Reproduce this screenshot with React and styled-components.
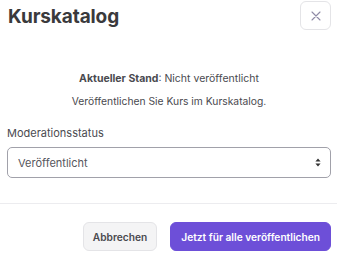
import React from 'react';
import styled, { createGlobalStyle } from 'styled-components';

const GlobalStyle = createGlobalStyle`
  body {
    margin: 0;
    background: #ffffff;
    font-family: Inter, "Liberation Sans", sans-serif;
    color: #3f3f46;
  }
`;

const Modal = styled.div`
  width: 337px;
  height: 260px;
  display: flex;
  flex-direction: column;
  background: #ffffff;
`;

const Header = styled.div`
  display: flex;
  align-items: center;
  justify-content: space-between;
  padding: 1px 6px 0 8px;
  height: 29px;
`;

const Title = styled.h2`
  margin: 0;
  padding-top: 2px;
  font-size: 19px;
  font-weight: 700;
  color: #3a3a3c;
  letter-spacing: -0.1px;
`;

const CloseButton = styled.button`
  width: 31px;
  height: 29px;
  border: 1px solid #e4e4e7;
  border-radius: 6px;
  background: #ffffff;
  display: flex;
  align-items: center;
  justify-content: center;
  padding: 0;
`;

const Body = styled.div`
  padding: 42px 6px 0 7px;
  display: flex;
  flex-direction: column;
`;

const StatusLine = styled.p`
  margin: 0;
  text-align: center;
  font-size: 10.5px;
  line-height: 14px;
  color: #4a4a4f;
  & + & {
    margin-top: 8px;
    font-size: 10.3px;
  }
`;

const Label = styled.label`
  margin-top: 18px;
  font-size: 11px;
  line-height: 14px;
  color: #4a4a4f;
`;

const SelectBox = styled.div`
  margin-top: 7px;
  height: 31px;
  box-sizing: border-box;
  border: 1px solid #a1a1aa;
  border-radius: 5px;
  display: flex;
  align-items: center;
  justify-content: space-between;
  padding: 0 9px 0 10px;
  font-size: 11px;
  color: #56565c;
`;

const Divider = styled.hr`
  margin: 25px 0 0;
  border: none;
  border-top: 1px solid #ececef;
`;

const Footer = styled.div`
  display: flex;
  justify-content: flex-end;
  gap: 13px;
  padding: 18px 6px 0 0;
`;

const Button = styled.button`
  height: 29px;
  box-sizing: border-box;
  border-radius: 6px;
  font-family: Inter, "Liberation Sans", sans-serif;
  font-size: 10.2px;
  font-weight: 600;
  padding: 0 ${({ primary }) => (primary ? '10px' : '9px')};
  border: 1px solid ${({ primary }) => (primary ? '#6d4fd8' : '#e4e4e7')};
  background: ${({ primary }) => (primary ? '#6d4fd8' : '#f4f4f5')};
  color: ${({ primary }) => (primary ? '#ffffff' : '#4a4a4f')};
`;

export default function App() {
  return (
    <>
      <GlobalStyle />
      <Modal>
        <Header>
          <Title>Kurskatalog</Title>
          <CloseButton aria-label="Schließen">
            <svg width="10" height="10" viewBox="0 0 10 10">
              <path d="M1 1L9 9M9 1L1 9" stroke="#8f8aa6" strokeWidth="1.1" strokeLinecap="round" />
            </svg>
          </CloseButton>
        </Header>
        <Body>
          <StatusLine>
            <b>Aktueller Stand</b>: Nicht veröffentlicht
          </StatusLine>
          <StatusLine>Veröffentlichen Sie Kurs im Kurskatalog.</StatusLine>
          <Label>Moderationsstatus</Label>
          <SelectBox>
            <span>Veröffentlicht</span>
            <svg width="6" height="9" viewBox="0 0 6 9">
              <path d="M3 0.5L5.6 3.6H0.4Z M3 8.5L5.6 5.4H0.4Z" fill="#333" />
            </svg>
          </SelectBox>
        </Body>
        <Divider />
        <Footer>
          <Button>Abbrechen</Button>
          <Button primary>Jetzt für alle veröffentlichen</Button>
        </Footer>
      </Modal>
    </>
  );
}
